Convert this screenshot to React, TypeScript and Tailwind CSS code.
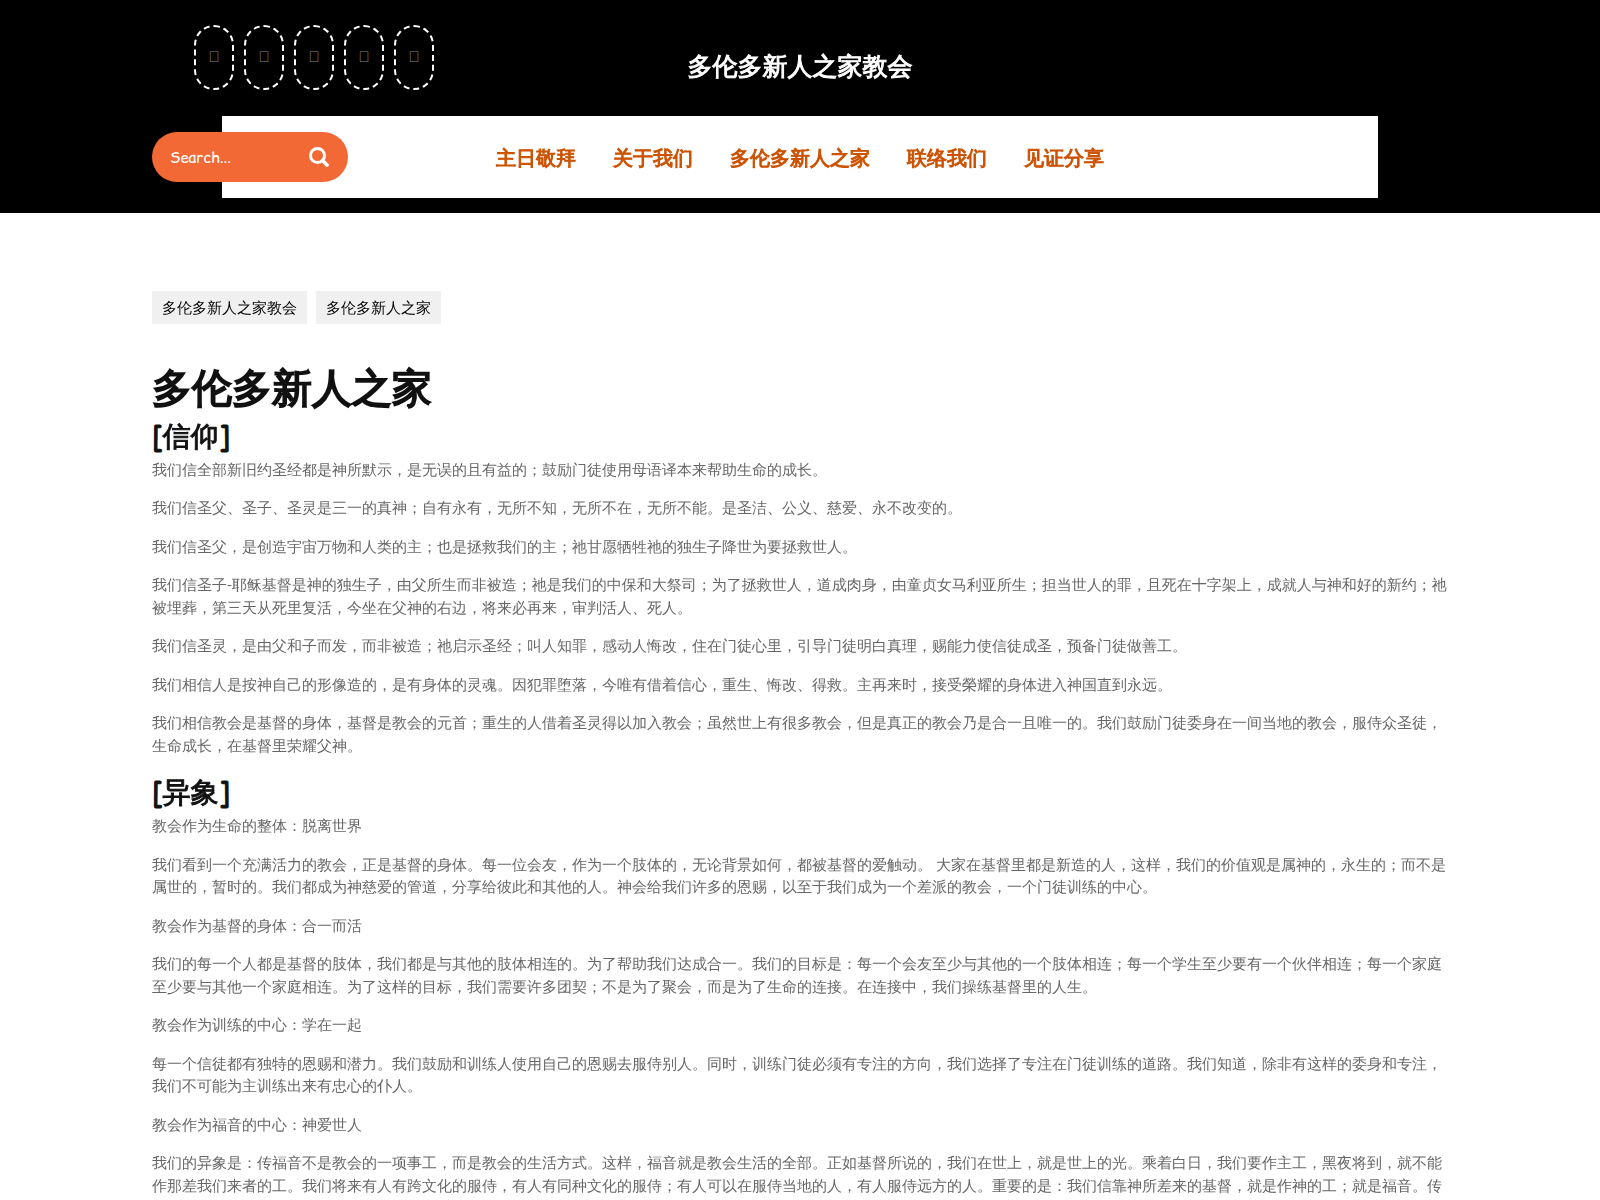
const socialLinks = [
  { label: 'Facebook', glyph: '\uf39e' },
  { label: 'Twitter', glyph: '\uf099' },
  { label: 'Instagram', glyph: '\uf16d' },
  { label: 'YouTube', glyph: '\uf167' },
  { label: 'LinkedIn', glyph: '\uf0e1' },
];

const menu = ['主日敬拜', '关于我们', '多伦多新人之家', '联络我们', '见证分享'];

const breadcrumbs = ['多伦多新人之家教会', '多伦多新人之家'];

const sections = [
  {
    title: '[信仰]',
    paragraphs: [
      '我们信全部新旧约圣经都是神所默示，是无误的且有益的；鼓励门徒使用母语译本来帮助生命的成长。',
      '我们信圣父、圣子、圣灵是三一的真神；自有永有，无所不知，无所不在，无所不能。是圣洁、公义、慈爱、永不改变的。',
      '我们信圣父，是创造宇宙万物和人类的主；也是拯救我们的主；祂甘愿牺牲祂的独生子降世为要拯救世人。',
      '我们信圣子-耶稣基督是神的独生子，由父所生而非被造；祂是我们的中保和大祭司；为了拯救世人，道成肉身，由童贞女马利亚所生；担当世人的罪，且死在十字架上，成就人与神和好的新约；祂被埋葬，第三天从死里复活，今坐在父神的右边，将来必再来，审判活人、死人。',
      '我们信圣灵，是由父和子而发，而非被造；祂启示圣经；叫人知罪，感动人悔改，住在门徒心里，引导门徒明白真理，赐能力使信徒成圣，预备门徒做善工。',
      '我们相信人是按神自己的形像造的，是有身体的灵魂。因犯罪堕落，今唯有借着信心，重生、悔改、得救。主再来时，接受榮耀的身体进入神国直到永远。',
      '我们相信教会是基督的身体，基督是教会的元首；重生的人借着圣灵得以加入教会；虽然世上有很多教会，但是真正的教会乃是合一且唯一的。我们鼓励门徒委身在一间当地的教会，服侍众圣徒，生命成长，在基督里荣耀父神。',
    ],
  },
  {
    title: '[异象]',
    paragraphs: [
      '教会作为生命的整体：脱离世界',
      '我们看到一个充满活力的教会，正是基督的身体。每一位会友，作为一个肢体的，无论背景如何，都被基督的爱触动。 大家在基督里都是新造的人，这样，我们的价值观是属神的，永生的；而不是属世的，暂时的。我们都成为神慈爱的管道，分享给彼此和其他的人。神会给我们许多的恩赐，以至于我们成为一个差派的教会，一个门徒训练的中心。',
      '教会作为基督的身体：合一而活',
      '我们的每一个人都是基督的肢体，我们都是与其他的肢体相连的。为了帮助我们达成合一。我们的目标是：每一个会友至少与其他的一个肢体相连；每一个学生至少要有一个伙伴相连；每一个家庭至少要与其他一个家庭相连。为了这样的目标，我们需要许多团契；不是为了聚会，而是为了生命的连接。在连接中，我们操练基督里的人生。',
      '教会作为训练的中心：学在一起',
      '每一个信徒都有独特的恩赐和潜力。我们鼓励和训练人使用自己的恩赐去服侍别人。同时，训练门徒必须有专注的方向，我们选择了专注在门徒训练的道路。我们知道，除非有这样的委身和专注，我们不可能为主训练出来有忠心的仆人。',
      '教会作为福音的中心：神爱世人',
      '我们的异象是：传福音不是教会的一项事工，而是教会的生活方式。这样，福音就是教会生活的全部。正如基督所说的，我们在世上，就是世上的光。乘着白日，我们要作主工，黑夜将到，就不能作那差我们来者的工。我们将来有人有跨文化的服侍，有人有同种文化的服侍；有人可以在服侍当地的人，有人服侍远方的人。重要的是：我们信靠神所差来的基督，就是作神的工；就是福音。传',
    ],
  },
];

function SearchIcon() {
  return (
    <svg viewBox="0 0 20 20" className="h-5 w-5" fill="none" stroke="currentColor" strokeWidth="3">
      <circle cx="8.5" cy="8.5" r="7" />
      <path d="M13.5 13.5 18 18" strokeWidth="3.8" strokeLinecap="round" />
    </svg>
  );
}

function Header() {
  return (
    <header className="bg-black pb-[15px]">
      <div className="mx-auto max-w-[1320px] px-3">
        <div className="grid grid-cols-3 pt-[25px] pb-[26px]">
          <ul className="flex gap-2.5 pl-[42px]">
            {socialLinks.map((link) => (
              <li key={link.label}>
                <a
                  href="#"
                  aria-label={link.label}
                  className="flex h-[65px] w-10 items-center justify-center rounded-[20px] border-2 border-dashed border-white font-[Liberation_Sans,sans-serif] text-[15px] text-[#888]"
                >
                  {link.glyph}
                </a>
              </li>
            ))}
          </ul>
          {/* the CJK face has no bold weight, so heavy text gets a stroke */}
          <p className="self-center pt-4 text-center text-[25px] [-webkit-text-stroke:1px]">
            <a href="#" className="text-white">多伦多新人之家教会</a>
          </p>
        </div>

        <div className="relative px-[70px]">
          <nav className="flex h-[82px] items-center justify-center gap-[37px] bg-white pt-0.5">
            {menu.map((item) => (
              <a key={item} href="#" className="text-xl text-[#cc5200] [-webkit-text-stroke:1px]">
                {item}
              </a>
            ))}
          </nav>
          <form
            role="search"
            className="absolute top-4 left-0 flex h-[50px] w-[196px] items-center justify-between rounded-[25px] bg-[#f36936] pr-[19px] pl-[18px]"
          >
            <input
              type="search"
              aria-label="Search"
              placeholder="Search..."
              className="w-28 bg-transparent pt-0.5 font-[Comic_Relief,Comic_Neue,cursive] text-[15px] text-white outline-none placeholder:text-white"
            />
            <button type="submit" aria-label="Search" className="text-white">
              <SearchIcon />
            </button>
          </form>
        </div>
      </div>
    </header>
  );
}

export default function App() {
  return (
    <div
      lang="zh-CN"
      className="min-h-screen bg-white font-[Open_Sans,WenQuanYi_Zen_Hei,Noto_Sans_CJK_SC,sans-serif] text-[15px] leading-normal text-[#666]"
    >
      <Header />
      <main className="mx-auto max-w-[1320px] px-3 pt-[78px]">
        <div className="flex gap-[9px]">
          {breadcrumbs.map((crumb) => (
            <a key={crumb} href="#" className="bg-[#f0f0f0] px-2.5 py-[5px] text-black">
              {crumb}
            </a>
          ))}
        </div>

        <h1 className="mt-[39px] mb-[5px] text-[40px] leading-[48px] text-[#111] [-webkit-text-stroke:2px]">
          多伦多新人之家
        </h1>
        {sections.map((section) => (
          <section key={section.title} className="pt-[3px]">
            <h2 className="mb-[5px] font-[Comic_Relief,WenQuanYi_Zen_Hei,Noto_Sans_CJK_SC,sans-serif] text-[28px] leading-[34px] text-[#111] [-webkit-text-stroke:1px]">
              {section.title}
            </h2>
            {section.paragraphs.map((text) => (
              <p key={text} className="mb-4">
                {text}
              </p>
            ))}
          </section>
        ))}
      </main>
    </div>
  );
}
